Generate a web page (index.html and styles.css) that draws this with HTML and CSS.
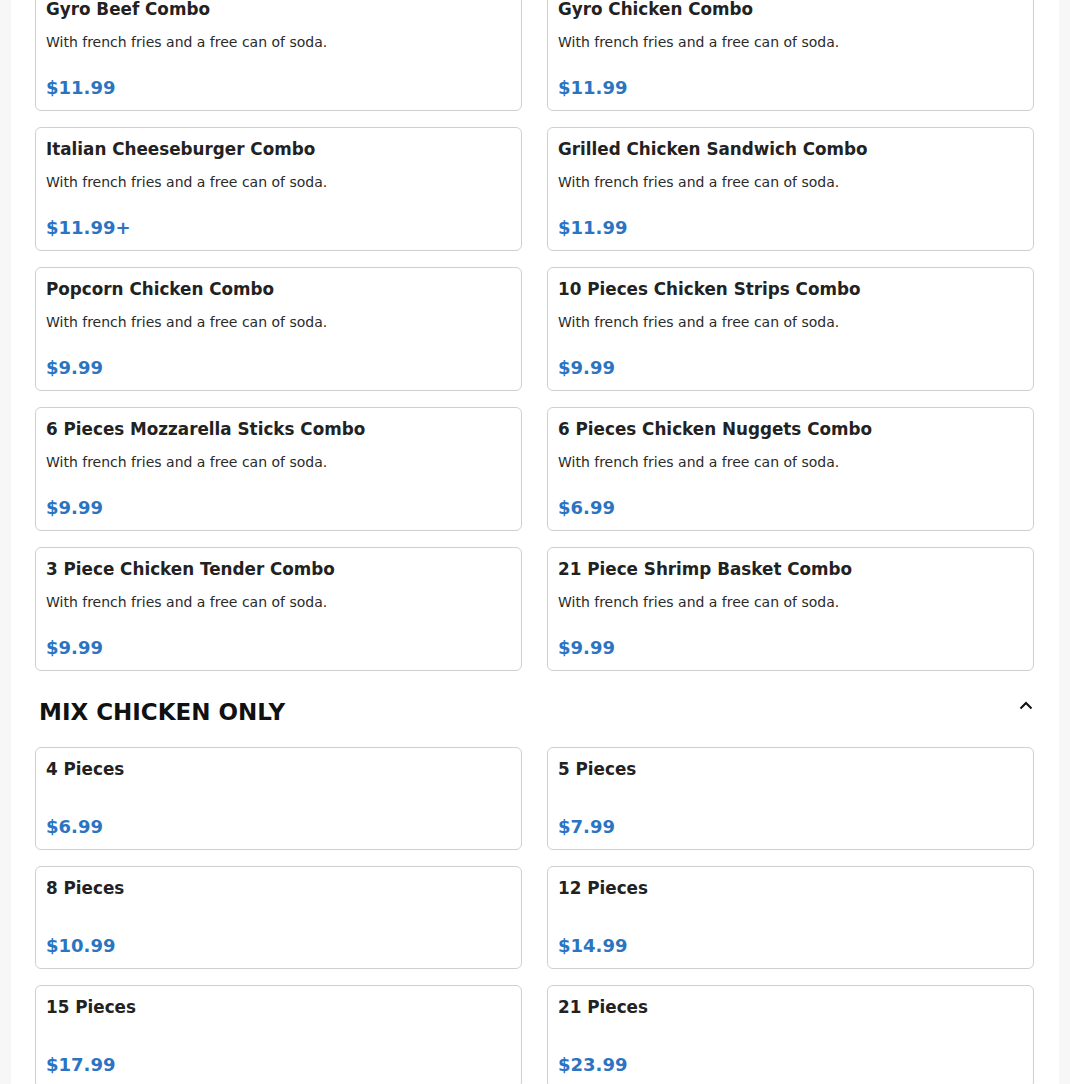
FILE: index.html
```html
<!DOCTYPE html>
<html>
<head>
<meta charset="utf-8">
<link rel="stylesheet" href="styles.css">
</head>
<body>
<div class="page">
  <div class="grid grid-first">
    <div class="card"><h3 class="title">Gyro Beef Combo</h3><p class="desc">With french fries and a free can of soda.</p><div class="price">$11.99</div></div>
    <div class="card"><h3 class="title">Gyro Chicken Combo</h3><p class="desc">With french fries and a free can of soda.</p><div class="price">$11.99</div></div>
    <div class="card"><h3 class="title">Italian Cheeseburger Combo</h3><p class="desc">With french fries and a free can of soda.</p><div class="price">$11.99+</div></div>
    <div class="card"><h3 class="title">Grilled Chicken Sandwich Combo</h3><p class="desc">With french fries and a free can of soda.</p><div class="price">$11.99</div></div>
    <div class="card"><h3 class="title">Popcorn Chicken Combo</h3><p class="desc">With french fries and a free can of soda.</p><div class="price">$9.99</div></div>
    <div class="card"><h3 class="title">10 Pieces Chicken Strips Combo</h3><p class="desc">With french fries and a free can of soda.</p><div class="price">$9.99</div></div>
    <div class="card"><h3 class="title">6 Pieces Mozzarella Sticks Combo</h3><p class="desc">With french fries and a free can of soda.</p><div class="price">$9.99</div></div>
    <div class="card"><h3 class="title">6 Pieces Chicken Nuggets Combo</h3><p class="desc">With french fries and a free can of soda.</p><div class="price">$6.99</div></div>
    <div class="card"><h3 class="title">3 Piece Chicken Tender Combo</h3><p class="desc">With french fries and a free can of soda.</p><div class="price">$9.99</div></div>
    <div class="card"><h3 class="title">21 Piece Shrimp Basket Combo</h3><p class="desc">With french fries and a free can of soda.</p><div class="price">$9.99</div></div>
  </div>

  <div class="section-head">
    <h2 class="section-title">MIX CHICKEN ONLY</h2>
    <svg class="chevron" width="14" height="10" viewBox="0 0 14 10"><path d="M1.5 8.5 L7 3 L12.5 8.5" fill="none" stroke="#111" stroke-width="2"/></svg>
  </div>

  <div class="grid">
    <div class="card"><h3 class="title">4 Pieces</h3><div class="price price-nodesc">$6.99</div></div>
    <div class="card"><h3 class="title">5 Pieces</h3><div class="price price-nodesc">$7.99</div></div>
    <div class="card"><h3 class="title">8 Pieces</h3><div class="price price-nodesc">$10.99</div></div>
    <div class="card"><h3 class="title">12 Pieces</h3><div class="price price-nodesc">$14.99</div></div>
    <div class="card"><h3 class="title">15 Pieces</h3><div class="price price-nodesc">$17.99</div></div>
    <div class="card"><h3 class="title">21 Pieces</h3><div class="price price-nodesc">$23.99</div></div>
  </div>
</div>
</body>
</html>
```
FILE: styles.css
```css
html, body {
  margin: 0;
  padding: 0;
  background: #f7f7f7;
  font-family: "DejaVu Sans", sans-serif;
  overflow: hidden;
}
.page {
  width: 1048px;
  margin: 0 auto;
  background: #ffffff;
  padding: 0 25px 40px 24px;
  box-sizing: border-box;
  min-height: 1200px;
}
.grid {
  display: grid;
  grid-template-columns: 1fr 1fr;
  column-gap: 25px;
  row-gap: 16px;
}
.grid-first {
  margin-top: -13px;
}
.card {
  border: 1px solid #cfcfcf;
  border-radius: 6px;
  padding: 11px 10px 11px;
  background: #fff;
}
.title {
  margin: 0 0 13px;
  font-size: 16.8px;
  line-height: 20px;
  font-weight: bold;
  color: #222;
}
.desc {
  margin: 0 0 25px;
  font-size: 14px;
  line-height: 20px;
  color: #2a2a2a;
}
.price {
  font-size: 18px;
  line-height: 22px;
  font-weight: bold;
  color: #2b74c2;
}
.price-nodesc {
  margin-top: 37px;
}
.section-head {
  display: flex;
  justify-content: space-between;
  align-items: flex-start;
  padding: 28px 1px 22px 4px;
}
.section-title {
  margin: 0;
  font-size: 23px;
  line-height: 26px;
  font-weight: bold;
  color: #111;
}
.chevron {
  margin-top: 1px;
}
```
